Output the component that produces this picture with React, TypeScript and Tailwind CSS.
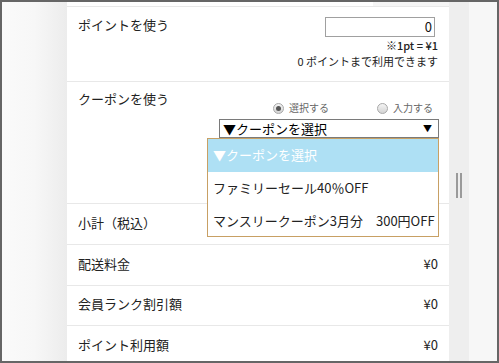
import React from "react";

const font = { fontFamily: '"Noto Sans CJK JP", "Noto Sans", sans-serif' };

function Radio({ checked, label }: { checked?: boolean; label: string }) {
  return (
    <div className="flex items-center gap-[5px]">
      <div className="w-[11px] h-[11px] rounded-full border border-[#a8a8a8] bg-gradient-to-b from-[#f4f4f4] to-[#d4d4d4] flex items-center justify-center">
        {checked && <div className="w-[5px] h-[5px] rounded-full bg-[#555]" />}
      </div>
      <span className="text-[10px] leading-[14px] text-[#666]">{label}</span>
    </div>
  );
}

function SumRow({ label, value, h = "h-[41px]" }: { label: string; value?: string; h?: string }) {
  return (
    <div className={`${h} shrink-0 border-t border-[#e8e8e8] flex items-center justify-between pl-[11px] pr-[11px] pb-[3px] text-[13px] text-[#222]`}>
      <span>{label}</span>
      {value && <span>{value}</span>}
    </div>
  );
}

export default function App() {
  return (
    <div
      className="w-[499px] h-[363px] border-2 border-[#666] flex overflow-hidden bg-white"
      style={font}
    >
      <div className="w-[65px] h-full shrink-0 bg-gradient-to-r from-[#fafafa] via-[#f7f7f7] to-[#ececec]" />
      <div className="w-[382px] h-full shrink-0 bg-white flex flex-col overflow-hidden">
        <div className="h-[4px] shrink-0 flex">
          <div className="flex-1 bg-white" />
          <div className="w-[76px] bg-[#f5f5f5]" />
        </div>
        {/* Points row */}
        <div className="h-[75px] shrink-0 border-t border-[#e8e8e8] flex justify-between pl-[11px] pr-[11px] pt-[10px]">
          <span className="text-[13px] leading-[20px] text-[#222] -mt-[2px]">ポイントを使う</span>
          <div className="flex flex-col items-end">
            <div className="w-[110px] h-[20px] border border-[#a0a0a0] mr-[3px] flex items-center justify-end pr-[2px] text-[13px] text-[#111]">
              0
            </div>
            <span className="mt-[1px] text-[11px] leading-[15px] text-[#222] font-medium">※1pt = ¥1</span>
            <span className="mt-[1px] text-[11px] leading-[15px] text-[#222]">0 ポイントまで利用できます</span>
          </div>
        </div>
        {/* Coupon row */}
        <div className="h-[122px] shrink-0 border-t border-[#e8e8e8] flex justify-between pl-[11px] pr-[10px] pt-[9px]">
          <span className="text-[13px] leading-[20px] text-[#222] -mt-[2px]">クーポンを使う</span>
          <div className="w-[220px] flex flex-col pt-[10px]">
            <div className="flex pl-[54px] gap-[48px]">
              <Radio checked label="選択する" />
              <Radio label="入力する" />
            </div>
            <div className="relative mt-[4px]">
              <div className="h-[19px] border border-[#7a7a7a] flex items-center justify-between pl-[3px] pr-[6px] bg-white">
                <span className="text-[13px] leading-[17px] text-black">▼クーポンを選択</span>
                <span className="text-[9px] leading-[10px] text-black">▼</span>
              </div>
              <div className="absolute top-full right-0 w-[232px] border border-[#c8a064] bg-white z-10">
                <div className="h-[33px] bg-[#aee0f4] flex items-center pl-[5px] pb-[1px] text-[13px] text-white">
                  ▼クーポンを選択
                </div>
                <div className="h-[33px] flex items-center pl-[5px] pb-[1px] text-[13px] text-[#222]">
                  ファミリーセール40％OFF
                </div>
                <div className="h-[31px] flex items-center pl-[5px] text-[13px] text-[#222] whitespace-nowrap">
                  マンスリークーポン3月分　300円OFF
                </div>
              </div>
            </div>
          </div>
        </div>
        <SumRow label="小計（税込）" />
        <SumRow label="配送料金" value="¥0" />
        <SumRow label="会員ランク割引額" value="¥0" h="h-[40px]" />
        <SumRow label="ポイント利用額" value="¥0" />
      </div>
      <div className="w-[20px] h-full shrink-0 bg-[#eeeeee] pt-[171px] pl-[7px]">
        <div className="flex gap-[2px] h-[25px]">
          <div className="w-[2px] h-full bg-[#9a9a9a]" />
          <div className="w-[2px] h-full bg-[#9a9a9a]" />
        </div>
      </div>
      <div className="flex-1 h-full bg-[#f7f7f7]" />
    </div>
  );
}
